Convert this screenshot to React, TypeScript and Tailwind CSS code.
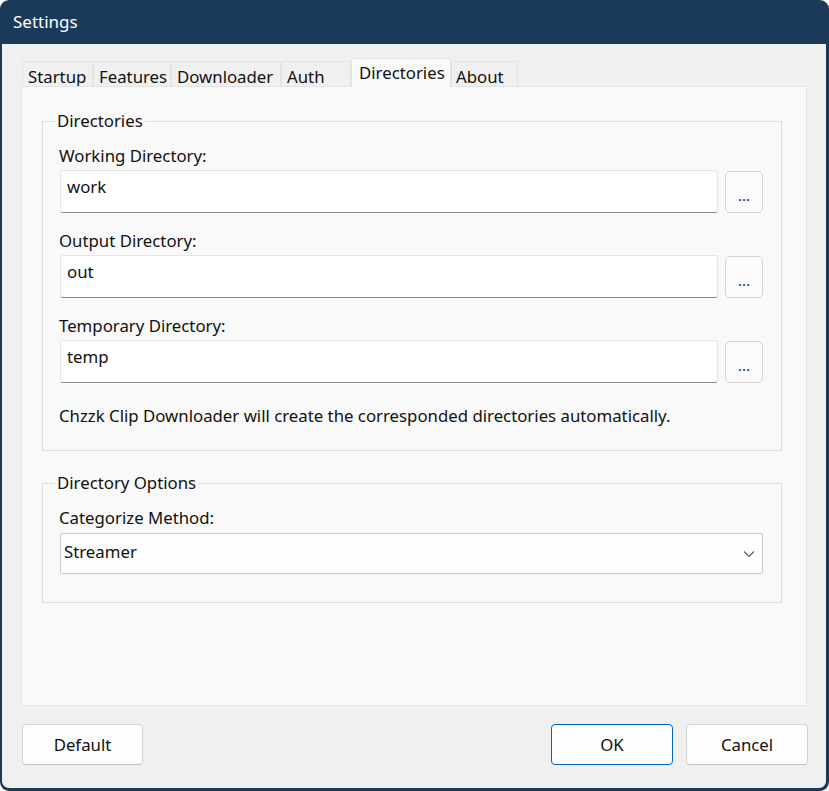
import React from "react";

const font = { fontFamily: '"Noto Sans", "Open Sans", sans-serif' };

function Tab({ label, w, selected, pl }: { label: string; w: number; selected?: boolean; pl?: number }) {
  if (selected) {
    return (
      <div
        className="relative z-10 h-[29px] bg-[#f9f9f9] border border-b-0 border-[#e3e3e3] rounded-t-[3px] flex items-start pt-[3px] text-[16.8px] leading-[22px] text-[#111]"
        style={{ width: w, paddingLeft: pl ?? 7 }}
      >
        {label}
      </div>
    );
  }
  return (
    <div
      className="h-[26px] bg-[#f0f0f0] border border-b-0 border-[#e3e3e3] rounded-t-[2px] flex items-start pt-[4px] text-[16.8px] leading-[22px] text-[#111]"
      style={{ width: w, paddingLeft: pl ?? 5 }}
    >
      {label}
    </div>
  );
}

function PathRow({ label, value, first }: { label: string; value: string; first?: boolean }) {
  return (
    <div className={first ? "" : "mt-[15px]"}>
      <div className="pt-[2px] text-[16.8px] leading-[22px] text-[#111] -ml-[1px]">{label}</div>
      <div className="flex items-start mt-[3px]">
        <div className="w-[658px] h-[43px] bg-white border border-[#e6e6e6] border-b-[#8b8b8b] rounded-[3px] pl-[6px] pt-[5px] text-[16.8px] leading-[22px] text-[#111]">
          {value}
        </div>
        <button className="ml-[7px] mt-[1px] w-[38px] h-[42px] bg-[#fbfbfb] border border-[#d4d4d4] rounded-[5px] text-[15px] leading-[22px] text-[#1a2a44] pt-[6px]">
          ...
        </button>
      </div>
    </div>
  );
}

export default function App() {
  return (
    <div className="w-[829px] h-[791px] bg-white" style={font}>
      <div className="w-full h-full rounded-[9px] bg-[#1b3a59] flex flex-col pl-[2px] pr-[3px] pb-[3px]">
        <div className="h-[44px] shrink-0 flex items-center pl-[11px] text-white text-[17px] leading-[22px]">
          Settings
        </div>
        <div className="flex-1 bg-[#f0f0f0] rounded-b-[7px] flex flex-col">
          {/* tabs */}
          <div className="mt-[14px] ml-[20px] h-[29px] flex items-end">
            <Tab label="Startup" w={71} />
            <Tab label="Features" w={78} />
            <Tab label="Downloader" w={110} />
            <Tab label="Auth" w={70} />
            <Tab label="Directories" w={100} selected pl={7} />
            <Tab label="About" w={67} pl={4} />
          </div>
          {/* panel */}
          <div className="-mt-[1px] ml-[19px] w-[786px] h-[620px] bg-[#f9f9f9] border border-[#e3e3e3] pt-[23px] pl-[20px]">
            <fieldset className="w-[740px] border border-[#dedede] pb-[23px] m-0">
              <legend className="ml-[12px] px-[2px] text-[16.8px] leading-[22px] text-[#111]">Directories</legend>
              <div className="mt-[11px] pl-[17px]">
                <PathRow label="Working Directory:" value="work" first />
                <PathRow label="Output Directory:" value="out" />
                <PathRow label="Temporary Directory:" value="temp" />
                <div className="mt-[22px] -ml-[1px] text-[16.8px] leading-[22px] text-[#111]">
                  Chzzk Clip Downloader will create the corresponded directories automatically.
                </div>
              </div>
            </fieldset>
            <fieldset className="mt-[21px] w-[740px] border border-[#dedede] pb-[28px]">
              <legend className="ml-[12px] px-[2px] text-[16.8px] leading-[22px] text-[#111]">Directory Options</legend>
              <div className="pl-[17px]">
                <div className="mt-[13px] -ml-[1px] text-[16.8px] leading-[22px] text-[#111]">Categorize Method:</div>
                <div className="mt-[4px] w-[703px] h-[41px] bg-[#fdfdfd] border border-[#cbcbcb] rounded-[2px] flex items-center justify-between pl-[3px] pr-[7px] text-[16.8px] leading-[22px] text-[#111]">
                  <span className="-mt-[4px]">Streamer</span>
                  <svg width="12" height="8" viewBox="0 0 12 8" className="mt-[1px]">
                    <path d="M1 1.5 L6 6.5 L11 1.5" fill="none" stroke="#5a5a5a" strokeWidth="1.1" />
                  </svg>
                </div>
              </div>
            </fieldset>
          </div>
          {/* bottom buttons */}
          <div className="mt-[18px] flex items-start pl-[20px] pr-[18px]">
            <button className="w-[121px] h-[41px] bg-[#fdfdfd] border border-[#d3d3d3] border-b-[#c0c0c0] rounded-[4px] text-[16.8px] leading-[22px] text-[#111]">
              Default
            </button>
            <div className="flex-1" />
            <button className="w-[122px] h-[41px] bg-[#fdfdfd] border border-[#0067c0] rounded-[4px] text-[16.8px] leading-[22px] text-[#111]">
              OK
            </button>
            <button className="ml-[13px] w-[122px] h-[41px] bg-[#fdfdfd] border border-[#d3d3d3] border-b-[#c0c0c0] rounded-[4px] text-[16.8px] leading-[22px] text-[#111]">
              Cancel
            </button>
          </div>
        </div>
      </div>
    </div>
  );
}
